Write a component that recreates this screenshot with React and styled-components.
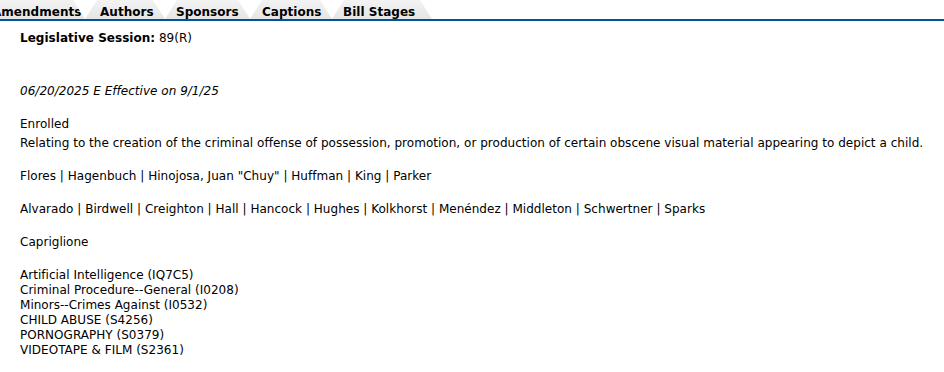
import styled, { createGlobalStyle } from "styled-components";

const Global = createGlobalStyle`
  html, body { margin: 0; padding: 0; background: #fff; }
  body {
    font-family: Verdana, "DejaVu Sans", sans-serif;
    font-size: 12px;
    letter-spacing: 0.025px;
    color: #000;
    overflow: hidden;
  }
`;

const TabBar = styled.div`
  display: flex;
  align-items: flex-end;
  height: 19px;
  border-bottom: 2px solid #00559a;
  margin-left: -${(p) => p.$shift}px;
`;

const Tab = styled.div`
  width: ${(p) => p.$w}px;
  height: 19px;
  flex: none;
  box-sizing: border-box;
  padding-left: ${(p) => p.$pad}px;
  font-weight: bold;
  line-height: 25px;
  white-space: nowrap;
  background: linear-gradient(to bottom, #f3f3f3 0%, #e5e5e5 100%);
  clip-path: polygon(12px 0, calc(100% - 12px) 0, 100% 100%, 0 100%);
`;

const Content = styled.div`
  padding-left: 20px;
`;

const Line = styled.div`
  line-height: 15px;
  margin-top: ${(p) => p.$top || 0}px;
  font-style: ${(p) => (p.$italic ? "italic" : "normal")};
  white-space: nowrap;
`;

const Subjects = styled.div`
  margin-top: 18px;
`;

const tabs = [
  { name: "Amendments", w: 107, pad: 14 },
  { name: "Authors", w: 80, pad: 15 },
  { name: "Sponsors", w: 85, pad: 11 },
  { name: "Captions", w: 82, pad: 12 },
  { name: "Bill Stages", w: 100, pad: 11 },
];

const subjects = [
  "Artificial Intelligence (IQ7C5)",
  "Criminal Procedure--General (I0208)",
  "Minors--Crimes Against (I0532)",
  "CHILD ABUSE (S4256)",
  "PORNOGRAPHY (S0379)",
  "VIDEOTAPE & FILM (S2361)",
];

export default function App() {
  return (
    <>
      <Global />
      <TabBar $shift={22}>
        {tabs.map((t) => (
          <Tab key={t.name} $w={t.w} $pad={t.pad}>
            {t.name}
          </Tab>
        ))}
      </TabBar>
      <Content>
        <Line $top={10}>
          <b>Legislative Session:</b> 89(R)
        </Line>
        <Line $top={38} $italic>
          06/20/2025 E Effective on 9/1/25
        </Line>
        <Line $top={18}>Enrolled</Line>
        <Line $top={4}>
          Relating to the creation of the criminal offense of possession, promotion, or production of certain obscene visual material appearing to depict a child.
        </Line>
        <Line $top={18}>
          Flores | Hagenbuch | Hinojosa, Juan "Chuy" | Huffman | King | Parker
        </Line>
        <Line $top={18}>
          Alvarado | Birdwell | Creighton | Hall | Hancock | Hughes | Kolkhorst | Menéndez | Middleton | Schwertner | Sparks
        </Line>
        <Line $top={18}>Capriglione</Line>
        <Subjects>
          {subjects.map((s) => (
            <Line key={s}>{s}</Line>
          ))}
        </Subjects>
      </Content>
    </>
  );
}
